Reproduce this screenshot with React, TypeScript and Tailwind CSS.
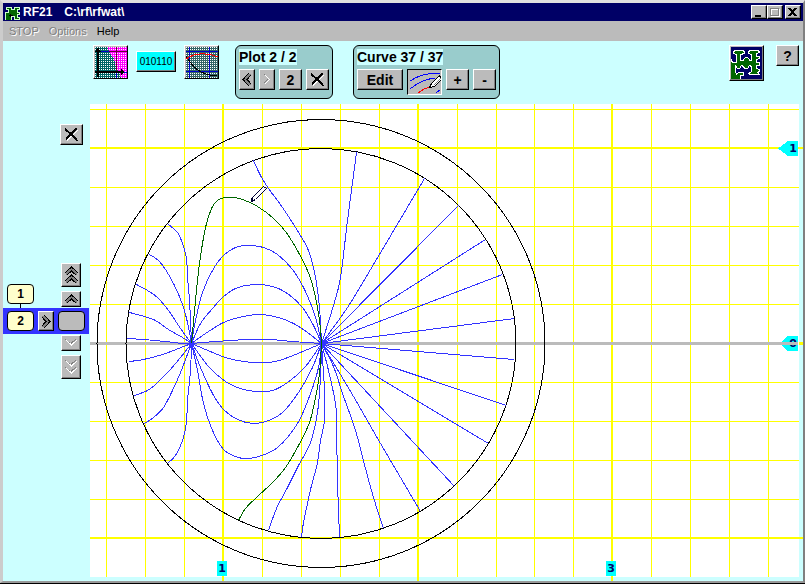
import type { ReactNode } from "react";

type Point = [number, number];

const BEVEL =
  "flex shrink-0 items-center justify-center border border-t-white border-l-white border-r-black border-b-black bg-[#bbbbbb] shadow-[inset_-1px_-1px_0_#808080]";

const A: Point = [191, 343];
const B: Point = [321, 343];

const blueCurves: Point[][] = [
  // boundary to the left source
  [[168, 224], [177, 232], [182, 243], [186, 258], [187, 277], [189, 300], A],
  [[149, 254], [158, 260], [165, 269], [174, 285], [182, 304], [187, 322], A],
  [[136, 284], [147, 290], [157, 297], [168, 310], [180, 328], A],
  [[129, 312], [144, 316], [155, 320], [168, 329], [182, 337], A],
  [[127, 338], [143, 339], [165, 341], [182, 343], A],
  [[129, 361], [143, 359], [162, 354], [178, 348], A],
  [[134, 395], [147, 390], [155, 384], [168, 371], [180, 357], A],
  [[144, 423], [153, 417], [163, 407], [172, 390], [180, 372], A],
  [[167, 463], [175, 455], [182, 440], [186, 422], [187, 400], [190, 370], A],
  // between the sources
  [A, [195, 320], [202, 292], [212, 270], [223, 255], [235, 247], [248, 245], [263, 247], [277, 254], [292, 269], [305, 291], [315, 317], B],
  [A, [200, 323], [212, 308], [222, 297], [235, 288], [253, 284], [272, 286], [287, 293], [302, 307], [313, 325], B],
  [A, [205, 333], [223, 322], [238, 317], [258, 314], [278, 317], [293, 323], [307, 332], B],
  [A, [215, 341], [248, 339], [270, 339], [292, 341], B],
  [A, [205, 349], [225, 357], [243, 361], [258, 362], [275, 361], [295, 354], B],
  [A, [208, 366], [225, 381], [240, 388], [255, 391], [272, 390], [287, 382], [305, 366], B],
  [A, [200, 367], [212, 393], [223, 409], [237, 419], [253, 423], [268, 420], [282, 412], [298, 392], [312, 367], B],
  [A, [197, 370], [203, 403], [212, 430], [223, 449], [235, 456], [245, 458], [258, 456], [277, 447], [297, 423], [310, 393], [318, 367], B],
  // right source to the boundary
  [[253, 160], [260, 175], [268, 188], [282, 207], [295, 227], [308, 250], [315, 277], [319, 307], B],
  [B, [333, 305], [340, 277], [347, 220], [356, 152]],
  [B, [347, 307], [373, 264], [424, 178]],
  [B, [458, 205]],
  [B, [485, 239]],
  [B, [502, 274]],
  [B, [514, 318]],
  [B, [514, 359]],
  [B, [506, 405]],
  [B, [488, 443]],
  [B, [454, 486]],
  [B, [340, 374], [360, 408], [380, 443], [400, 477], [420, 511]],
  [B, [333, 366], [342, 393], [355, 430], [365, 468], [373, 497], [383, 528]],
  [B, [328, 370], [335, 403], [336, 423], [337, 480], [339, 537]],
  [B, [324, 390], [324, 420], [320, 440], [317, 462], [310, 489], [307, 503], [303, 522], [301, 537]],
  [B, [320, 377], [317, 412], [310, 442], [298, 465], [287, 487], [276, 508], [268, 530]],
];

const greenCurves: Point[][] = [
  [A, [195, 300], [199, 263], [205, 227], [211, 208], [217, 200], [224, 197], [233, 197], [242, 199], [257, 206], [272, 217], [285, 231], [298, 252], [309, 275], [315, 297], [319, 320], B],
  [B, [319, 373], [315, 397], [309, 422], [298, 445], [285, 467], [272, 482], [257, 496], [245, 508], [238, 520]],
];

// Catmull-Rom through the points, written as cubic segments
function smooth(pts: Point[]) {
  let d = `M${pts[0][0] + 0.5} ${pts[0][1] + 0.5}`;
  for (let i = 0; i < pts.length - 1; i++) {
    const p0 = pts[i - 1] ?? pts[i];
    const p1 = pts[i];
    const p2 = pts[i + 1];
    const p3 = pts[i + 2] ?? p2;
    const c = [
      p1[0] + (p2[0] - p0[0]) / 6,
      p1[1] + (p2[1] - p0[1]) / 6,
      p2[0] - (p3[0] - p1[0]) / 6,
      p2[1] - (p3[1] - p1[1]) / 6,
      p2[0],
      p2[1],
    ].map((n) => n + 0.5);
    d += `C${c.join(" ")}`;
  }
  return d;
}

const minorX = [106, 145, 184, 262, 301, 340, 379, 457, 496, 534, 573, 651, 690, 729, 768];
const majorX = [222, 417, 611];
const minorY = [109, 187, 226, 265, 304, 382, 421, 460, 499];
const majorY = [147, 537];

function Plot() {
  return (
    <svg viewBox="90 104 713 477" className="block h-auto w-full" shapeRendering="crispEdges" role="img" aria-label="Plot 2">
      <rect x="90" y="104" width="709" height="473" fill="#fff" />
      <g fill="#ffff00">
        {minorX.map((x) => <rect key={x} x={x} y="104" width="1" height="473" />)}
        {minorY.map((y) => <rect key={y} x="90" y={y} width="709" height="1" />)}
        {majorX.map((x) => <rect key={x} x={x} y="104" width="2" height="477" />)}
        {majorY.map((y) => <rect key={y} x="90" y={y} width="713" height="2" />)}
        <rect x="799" y="342" width="4" height="3" />
      </g>

      <g fill="#00ffff">
        <path d="M778 148.500L788 141H798V156H788Z" />
        <path d="M780 343.500L788 336H798V351H788Z" />
        <rect x="217" y="561" width="10" height="15" />
        <rect x="606" y="561" width="10" height="15" />
      </g>
      <g fill="#000066" className="font-['DejaVu_Sans',sans-serif] text-[11px] font-bold" textAnchor="middle">
        <text x="793" y="152">1</text>
        <text x="793" y="347">0</text>
        <text x="222" y="572">1</text>
        <text x="611" y="572">3</text>
      </g>
      <rect x="90" y="342" width="708" height="3" fill="#bbbbbb" />

      <g fill="none" strokeWidth="1">
        <circle cx="321" cy="343.500" r="224" stroke="#000" />
        <circle cx="321" cy="343.500" r="195" stroke="#000" />
        {blueCurves.map((pts, i) => <path key={i} d={smooth(pts)} stroke="#3333ff" />)}
        {greenCurves.map((pts, i) => <path key={i} d={smooth(pts)} stroke="#006600" />)}
      </g>

      {/* pencil cursor */}
      <path d="M251.500 201.500L252.500 197.500L263.500 186.500L266.500 188.500L255.500 199.500Z" fill="#fff" stroke="#000033" />
      <path d="M251 198h2v2h2v1h-2v1h-2z" fill="#000033" />
    </svg>
  );
}

function Chevron({ d, w, h, off }: { d: string; w: number; h: number; off?: boolean }) {
  return (
    <svg width={w} height={h} viewBox={`0 0 ${w} ${h}`} fill="none" shapeRendering="crispEdges">
      {off ? (
        <>
          <path d={d} stroke="#808080" strokeWidth="1" transform="translate(-1 -1)" />
          <path d={d} stroke="#fff" strokeWidth="1" />
        </>
      ) : (
        <>
          <path d={d} stroke="#000" strokeWidth="4" />
          <path d={d} stroke="#808080" strokeWidth="2" />
        </>
      )}
    </svg>
  );
}

function Cross() {
  return (
    <svg width="15" height="15" viewBox="0 0 15 15" fill="none" shapeRendering="crispEdges">
      <path d="M3 3L13.500 14M14 3L3 13.500" stroke="#fff" />
      <path d="M1 2L8 8L13.500 14" stroke="#000" strokeWidth="2" />
      <path d="M12.500 1.500L7 7L2 12.500" stroke="#000" strokeWidth="2" />
    </svg>
  );
}

function Dots({ id }: { id: string }) {
  return (
    <pattern id={id} width="2" height="2" patternUnits="userSpaceOnUse">
      <rect width="1" height="1" fill="#fff" />
    </pattern>
  );
}

function AxesIcon() {
  return (
    <svg width="32" height="31" viewBox="0 0 32 31" shapeRendering="crispEdges">
      <defs><Dots id="axesDots" /></defs>
      <rect width="32" height="31" fill="#006666" />
      <path d="M12 0H32V31H26L24 26L21 20L19 12L16 8Z" fill="#ff00ff" />
      <rect width="32" height="31" fill="url(#axesDots)" />
      <path d="M2 4.500H14M2 25.500H32M21.500 19V31" stroke="#0000cc" />
      <path d="M14 4.500H32M21.500 0V25" stroke="#660033" />
      <path d="M3 2V30M0 25H28" stroke="#000" strokeWidth="2" />
      <path d="M0 5L3 0L6 5ZM26 22L30 25L26 28Z" />
    </svg>
  );
}

function CurvesIcon() {
  return (
    <svg width="32" height="31" viewBox="0 0 32 31" fill="none" shapeRendering="crispEdges">
      <defs><Dots id="curveDots" /></defs>
      <rect width="32" height="31" fill="#336666" />
      <rect width="32" height="31" fill="url(#curveDots)" />
      <path d="M3.500 0V31M23.500 0V31M0 4.500H32M0 24.500H32" stroke="#0000cc" />
      <path d="M0 9C6 19 13 28 31 29" stroke="#000" />
      <path d="M0 12C8 6 21 5 32 10" stroke="#ff0000" />
    </svg>
  );
}

function TracePencil() {
  return (
    <svg width="32" height="23" viewBox="0 0 32 23" fill="none" shapeRendering="crispEdges">
      <path d="M1 10C8 5 18 2 31 2M1 18C8 12 17 8 26 7M27 22L31 19" stroke="#0000ff" />
      <path d="M9 22C13 19 16 17 21 16" stroke="#ff0000" />
      <path d="M20.500 16.500L22.500 12.500L30.500 4.500L32.500 8.500L25.500 15.500Z" fill="#fff" stroke="#000" />
      <path d="M24.500 14.500L32 7" stroke="#808080" />
    </svg>
  );
}

function PuzzleIcon() {
  return (
    <svg width="31" height="32" viewBox="0 0 31 32" shapeRendering="crispEdges">
      <rect width="32" height="33" fill="#000066" />
      <path
        d="M2.500 4.500L4.500 3.500H11.500L13.500 4.500V6.500L9.500 7.500V13.500H12.500V12.500L14.500 10.500H16.500L18.500 12.500V13.500H20.500V7.500L17.500 6.500V4.500L19.500 3.500H27.500L28.500 5.500L25.500 6.500V9.500H28.500V11.500L25.500 12.500V15.500H28.500V18.500H25.500V21.500L28.500 22.500V24.500L26.500 25.500L28.500 27.500H19.500L17.500 26.500L20.500 24.500V19.500L18.500 18.500L16.500 21.500H13.500L12.500 19.500L10.500 18.500L8.500 21.500H6.500L4.500 18.500V24.500L5.500 27.500L7.500 25.500H12.500V28.500H9.500V32.500H-0.500V11.500L1.500 15.500H5.500V7.500L2.500 6.500Z"
        fill="#006600"
        stroke="#fff"
      />
    </svg>
  );
}

function AppIcon() {
  return (
    <svg width="16" height="16" viewBox="0 0 16 16" shapeRendering="crispEdges">
      <path d="M0 8.500H3.500V5.500H1.500V3.500H6.500V5.500H9.500V3.500H14.500V5.500H12.500V8.500H14.500V10.500H12.500V13.500H14.500V15.500H9.500V12.500H6.500V16H0Z" fill="#006600" stroke="#ccffcc" />
      <path d="M4 11.500H8M5.500 10V13" stroke="#000" />
    </svg>
  );
}

function Btn({ label, className, children }: { label: string; className: string; children: ReactNode }) {
  return (
    <button aria-label={label} className={`${BEVEL} ${className}`}>
      {children}
    </button>
  );
}

function Panel({ title, children }: { title: string; children: ReactNode }) {
  return (
    <section className="h-[54px] rounded-md border border-black bg-[#99cccc] px-[3px] pt-[3px]">
      <h2 className="mb-1 w-fit bg-[#ccffff] text-[14px] leading-4 font-bold">{title}</h2>
      <div className="flex items-start gap-1">{children}</div>
    </section>
  );
}

const UP = "M2 8L7.500 3L13 8";
const DOWN = "M2 2L7.500 7L13 2";

export default function App() {
  return (
    <div className="min-h-screen border-b border-black bg-[#ccffff] font-['Liberation_Sans',Arial,sans-serif] text-black">
      <div className="border-t-[3px] border-r-2 border-b-2 border-l-[3px] border-t-[#e0e0e0] border-r-[#808080] border-b-[#999999] border-l-[#cccccc]">
        <header className="flex h-[18px] items-center justify-between bg-[#000066] pr-[2px] pl-[2px] text-white">
          <div className="flex items-center gap-[2px]">
            <AppIcon />
            <h1 className="flex gap-3 text-[12px] leading-4 font-bold">
              <span>RF21</span>
              <span>C:\rf\rfwat\</span>
            </h1>
          </div>
          <div className="flex">
            <Btn label="Minimize" className="h-[14px] w-4">
              <svg width="12" height="10" shapeRendering="crispEdges"><rect x="2" y="8" width="6" height="2" /></svg>
            </Btn>
            <Btn label="Maximize" className="h-[14px] w-4">
              <svg width="12" height="10" fill="none" shapeRendering="crispEdges">
                <path d="M2.500 2H10.500V9.500H2.500Z" stroke="#fff" />
                <path d="M1.500 1H9.500V8.500H1.500Z" stroke="#808080" />
              </svg>
            </Btn>
            <Btn label="Close" className="ml-[2px] h-[14px] w-4">
              <svg width="12" height="10" shapeRendering="crispEdges"><path d="M2 1L9 9M9 1L2 9" stroke="#000" strokeWidth="2" /></svg>
            </Btn>
          </div>
        </header>

        <nav className="flex h-5 items-center gap-[10px] bg-[#bbbbbb] px-[6px] text-[11px] leading-4">
          <button disabled className="text-[#808080] [text-shadow:1px_1px_0_#fff]">STOP</button>
          <button disabled className="text-[#808080] [text-shadow:1px_1px_0_#fff]">Options</button>
          <button>Help</button>
        </nav>

        <div className="flex h-[63px] items-start justify-between pt-1 pr-1 pl-[90px]">
          <div className="flex gap-5">
            <div className="flex items-start gap-2">
              <Btn label="Axes" className="h-[34px] w-[35px]"><AxesIcon /></Btn>
              <button className="mt-[6px] flex h-[21px] w-10 items-center justify-center border border-t-white border-l-white border-r-black border-b-black bg-[#00ffff] text-[10px] leading-4 shadow-[inset_-1px_-1px_0_#808080]">
                010110
              </button>
              <Btn label="Curves" className="mr-[-4px] h-[34px] w-[35px]"><CurvesIcon /></Btn>
            </div>
            <Panel title="Plot 2 / 2">
              <Btn label="Previous plot" className="h-[21px] w-4"><Chevron w={10} h={13} d="M8 1L3 6.500L8 12" /></Btn>
              <Btn label="Next plot" className="h-[21px] w-4"><Chevron off w={10} h={13} d="M3 2L7.500 6.500L3 11" /></Btn>
              <button className={`${BEVEL} h-[21px] w-[23px] text-[14px] leading-4 font-bold`}>2</button>
              <Btn label="Delete plot" className="h-[21px] w-[23px]"><Cross /></Btn>
            </Panel>
            <Panel title="Curve 37 / 37">
              <button className={`${BEVEL} h-[21px] w-[46px] text-[14px] leading-4 font-bold`}>Edit</button>
              <button
                aria-label="Trace curve"
                aria-pressed="true"
                className="flex h-[26px] w-[35px] items-center justify-center border border-t-black border-l-black border-r-white border-b-white bg-[#bbbbbb]"
              >
                <TracePencil />
              </button>
              <button className={`${BEVEL} h-[21px] w-[23px] text-[14px] leading-4 font-bold`}>+</button>
              <button className={`${BEVEL} h-[21px] w-[23px] text-[14px] leading-4 font-bold`}>-</button>
            </Panel>
          </div>
          <div className="flex items-start gap-3">
            <Btn label="About" className="h-9 w-[35px]"><PuzzleIcon /></Btn>
            <button className={`${BEVEL} h-[21px] w-[23px] text-[14px] leading-4 font-bold`}>?</button>
          </div>
        </div>

        <main className="flex items-start">
          <aside className="flex w-[87px] shrink-0 flex-col pt-5">
            <Btn label="Remove" className="mr-[7px] h-[21px] w-[23px] self-end"><Cross /></Btn>

            <div className="mt-[118px] flex items-end justify-between pr-[9px] pl-1">
              <div className="flex flex-col items-center">
                <button className="h-5 w-[27px] rounded-sm border border-black bg-[#ffffcc] text-[12px] leading-4 font-bold">1</button>
                <span className="h-[4px] w-px bg-black" />
              </div>
              <div className="flex flex-col gap-1">
                <Btn label="First" className="h-6 w-5">
                  <Chevron w={15} h={18} d="M2 8L7.500 3L13 8M2 16L7.500 11L13 16" />
                </Btn>
                <Btn label="Up" className="mb-px h-4 w-5"><Chevron w={15} h={10} d={UP} /></Btn>
              </div>
            </div>

            <div className="mr-px flex h-[26px] items-center gap-1 bg-[#3333ff] px-1">
              <button className="h-5 w-[27px] rounded-sm border border-black bg-[#ffffcc] text-[12px] leading-4 font-bold">2</button>
              <Btn label="Open" className="h-5 w-4"><Chevron w={10} h={13} d="M2 1L7 6.500L2 12" /></Btn>
              <button aria-label="Slot" className="h-5 w-[27px] rounded-sm border border-black bg-[#bbbbbb]" />
            </div>

            <div className="mt-px mr-[9px] flex flex-col gap-1 self-end">
              <Btn label="Down" className="h-4 w-5"><Chevron off w={15} h={10} d={DOWN} /></Btn>
              <Btn label="Last" className="h-6 w-5">
                <Chevron off w={15} h={18} d="M2 3L7.500 8L13 3M2 10L7.500 15L13 10" />
              </Btn>
            </div>
          </aside>

          <div className="min-w-0 flex-1">
            <Plot />
          </div>
        </main>
      </div>
    </div>
  );
}
